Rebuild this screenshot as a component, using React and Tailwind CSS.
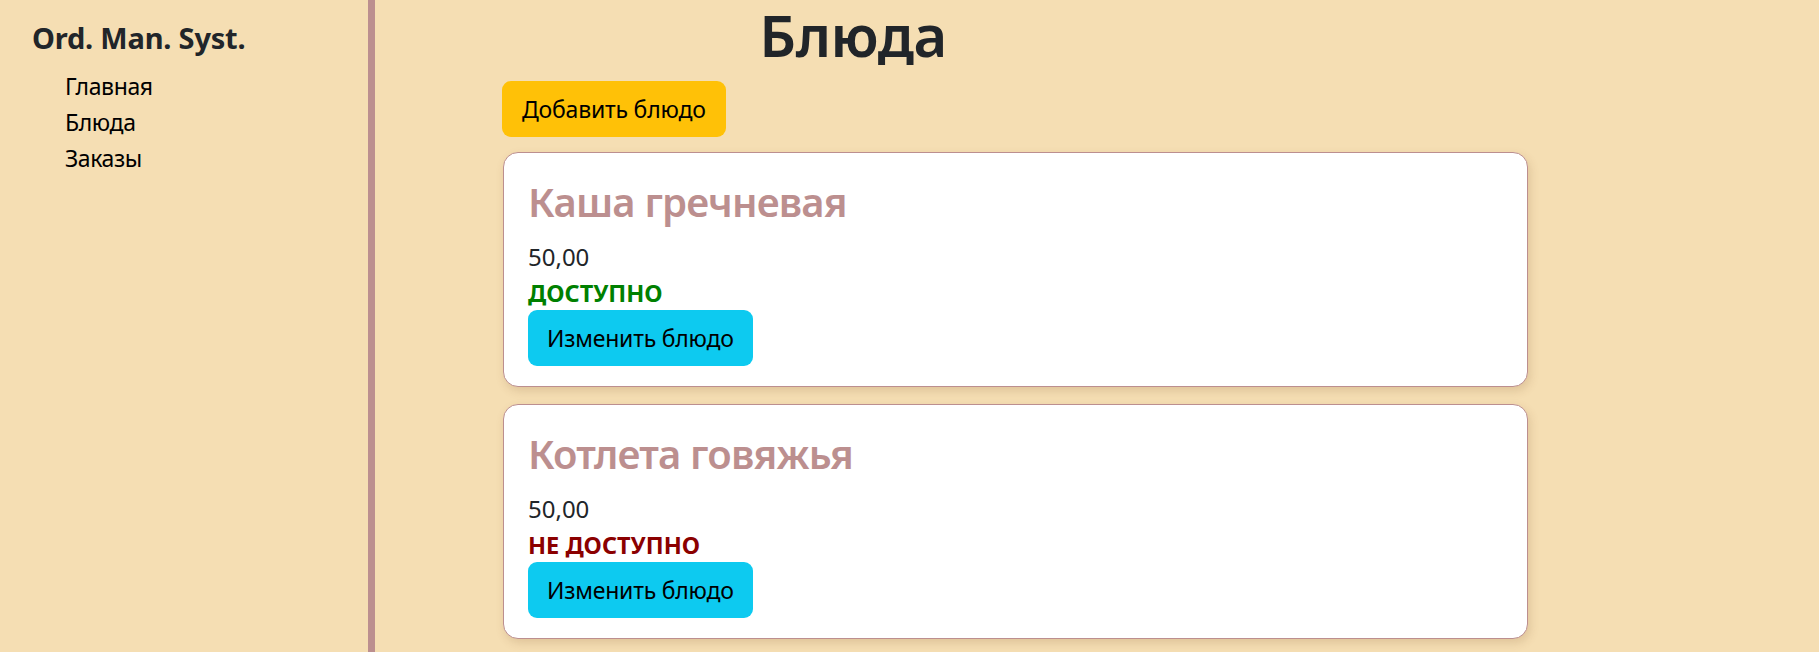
import React from "react";

const dishes = [
    { id: 1, name: "Каша гречневая", price: "50,00", available: true },
    { id: 2, name: "Котлета говяжья", price: "50,00", available: false },
];

function Sidebar() {
    return (
        <aside className="w-[375px] shrink-0 min-h-screen border-r-[7px] border-[#bc8f8f] pl-[32px] pt-[20px]">
            <h5 className="text-[29px] leading-[36px] font-bold text-[#212529] tracking-[-0.2px]">Ord. Man. Syst.</h5>
            <ul className="mt-[12px] pl-[33px] text-[23px] leading-[36px] text-black tracking-[-0.4px]">
                <li>Главная</li>
                <li>Блюда</li>
                <li>Заказы</li>
            </ul>
        </aside>
    );
}

function DishCard({ dish }) {
    return (
        <div className="w-[1025px] bg-white border border-[#bc8f8f] rounded-[15px] px-[24px] pt-[24px] pb-[20px] shadow-[2px_4px_10px_rgba(120,80,40,0.18)]">
            <h3 className="text-[40px] leading-[50px] font-semibold text-[#bc8f8f] mb-[12px] tracking-[-0.8px]">{dish.name}</h3>
            <p className="text-[24px] leading-[36px] text-[#212529]">{dish.price}</p>
            {dish.available ? (
                <p className="text-[23.5px] leading-[36px] font-bold text-[#008000]">ДОСТУПНО</p>
            ) : (
                <p className="text-[23.5px] leading-[36px] font-bold text-[#8b0000]">НЕ ДОСТУПНО</p>
            )}
            <button className="mt-[-1px] h-[56px] px-[19px] rounded-[9px] bg-[#0dcaf0] text-[23px] leading-[36px] text-black tracking-[-0.2px]">
                Изменить блюдо
            </button>
        </div>
    );
}

export default function App() {
    return (
        <div className="flex min-h-screen bg-[#f5deb3]" style={{ fontFamily: '"Noto Sans", "Open Sans", sans-serif' }}>
            <Sidebar />
            <main className="flex-1 pl-[125px]">
                <div className="w-[706px] text-center">
                    <h2 className="text-[58px] leading-[70px] font-semibold text-[#212529] tracking-[-0.5px]">Блюда</h2>
                </div>
                <button className="mt-[11px] ml-[2px] h-[56px] px-[20px] rounded-[9px] bg-[#ffc107] text-[23px] leading-[36px] text-black tracking-[-0.2px]">
                    Добавить блюдо
                </button>
                <div className="mt-[15px] ml-[3px] flex flex-col gap-[17px] pb-[20px]">
                    {dishes.map((d) => (
                        <DishCard key={d.id} dish={d} />
                    ))}
                </div>
            </main>
        </div>
    );
}
